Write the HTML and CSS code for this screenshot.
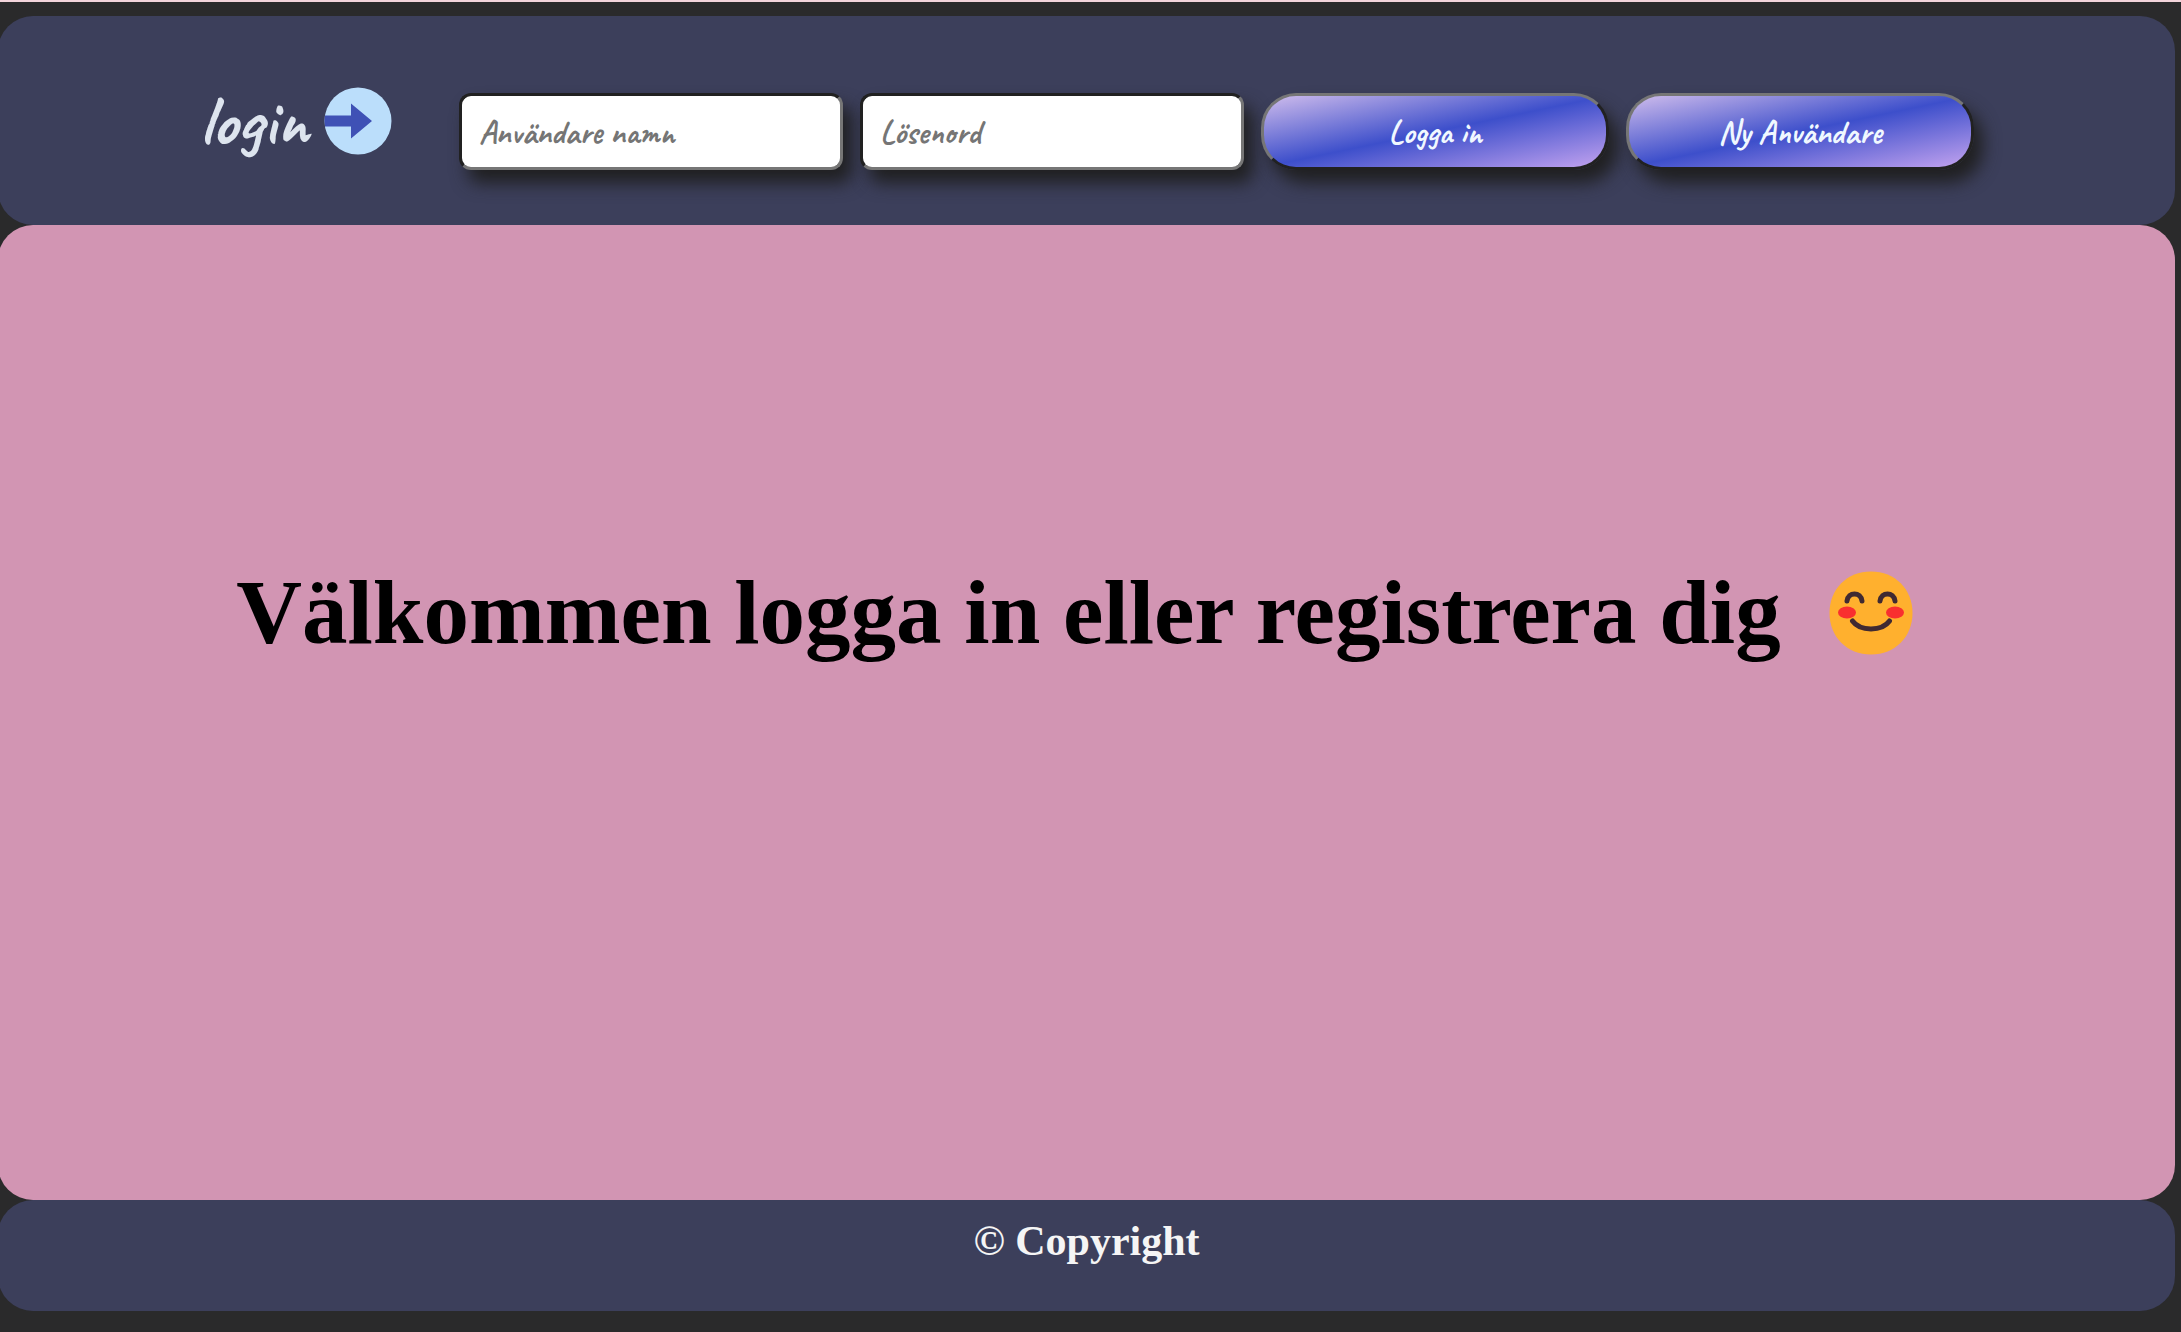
FILE: index.html
```html
<!DOCTYPE html>
<html lang="sv">
<head>
  <meta charset="utf-8">
  <meta name="viewport" content="width=device-width, initial-scale=1">
  <title>Login</title>
  <link rel="stylesheet" href="styles.css">
</head>
<body>
  <header class="panel header">
    <div class="brand">
      <span>login</span>
      <svg class="brand-icon" viewBox="0 0 68 68" aria-hidden="true">
        <defs><clipPath id="disc"><circle cx="34" cy="34" r="33.5"/></clipPath></defs>
        <circle cx="34" cy="34" r="33.5" fill="#bbdefb"/>
        <path d="M0 28.500H27V16.500L48 34L27 51.500V39.500H0Z" fill="#3f51b5" clip-path="url(#disc)"/>
      </svg>
    </div>
    <form class="login-form">
      <input class="field" type="text" placeholder="Användare namn" aria-label="Användare namn">
      <input class="field" type="password" placeholder="Lösenord" aria-label="Lösenord">
      <button class="button" type="button">Logga in</button>
      <button class="button" type="button">Ny Användare</button>
    </form>
  </header>
  <main class="panel main">
    <h1 class="welcome">
      <span>Välkommen logga in eller registrera dig</span>
      <svg class="smiley" viewBox="0 0 84 84" aria-hidden="true">
        <path d="M42 .5C66 .5 83.500 18 83.500 42S66 83.500 42 83.500S.5 66 .5 42S18 .5 42 .5Z" fill="#ffb02e"/>
        <ellipse cx="18" cy="41.500" rx="9" ry="6" fill="#f92f2f"/>
        <ellipse cx="66" cy="41.500" rx="9" ry="6" fill="#f92f2f"/>
        <g fill="none" stroke="#402a32" stroke-width="5" stroke-linecap="round">
          <path d="M18 30C19 20.500 32 20.500 33 30"/>
          <path d="M51 30C52 20.500 65 20.500 66 30"/>
          <path d="M23.500 50C31 60.500 53 60.500 60.500 50"/>
        </g>
      </svg>
    </h1>
  </main>
  <footer class="panel footer">© Copyright</footer>
</body>
</html>
```
FILE: styles.css
```css
* {
  box-sizing: border-box;
}

body {
  display: flex;
  flex-direction: column;
  min-height: 100vh;
  margin: 0;
  padding: 14px 0 21px;
  border-top: 2px solid #f3d4db;
  background: #2a2a2b;
  overflow-x: hidden;
}

.panel {
  margin: 0 6px 0 -2px;
  border-radius: 35px;
  background: #3c3f5b;
}

.header {
  display: flex;
  flex-wrap: wrap;
  align-items: center;
  justify-content: center;
  gap: 0 67px;
  padding: 55px 30px;
  font-family: Caveat, Lato, sans-serif;
  font-weight: 700;
}

.brand {
  display: flex;
  align-items: center;
  gap: 16px;
  color: #dde4ee;
  font-size: 70px;
  line-height: 66px;
}

.brand-icon {
  width: 68px;
  height: 68px;
}

.login-form {
  display: flex;
  flex-wrap: wrap;
  gap: 17px;
  margin-top: 22px;
}

.field,
.button {
  height: 77px;
  border: 3px solid;
  box-shadow: 9px 13px 17px #202021;
  font: inherit;
  font-size: 33px;
}

.field {
  width: 384px;
  padding: 0 17px;
  border-color: #212121 #767676 #767676 #212121;
  border-radius: 12px;
  background: #fff;
}

.field::placeholder {
  color: #757575;
  opacity: 1;
}

.button {
  width: 348px;
  border-color: #767676 #212121 #212121 #767676;
  border-radius: 35px;
  background: linear-gradient(to bottom right, #cfbcec, #3d4fcb 50%, #c3a3ef);
  color: aliceblue;
}

.main {
  flex: 1;
  padding: 336px 26px 80px 2px;
  background: #d295b3;
}

.welcome {
  display: flex;
  align-items: center;
  justify-content: center;
  gap: 48px;
  margin: 0;
  font: 700 91px/104px "Liberation Serif", serif;
  color: #000;
}

.smiley {
  flex: none;
  width: 84px;
  height: 84px;
}

.footer {
  padding: 17px 16px 46px;
  color: whitesmoke;
  font: 700 42px/48px "Liberation Serif", serif;
  text-align: center;
}
```
